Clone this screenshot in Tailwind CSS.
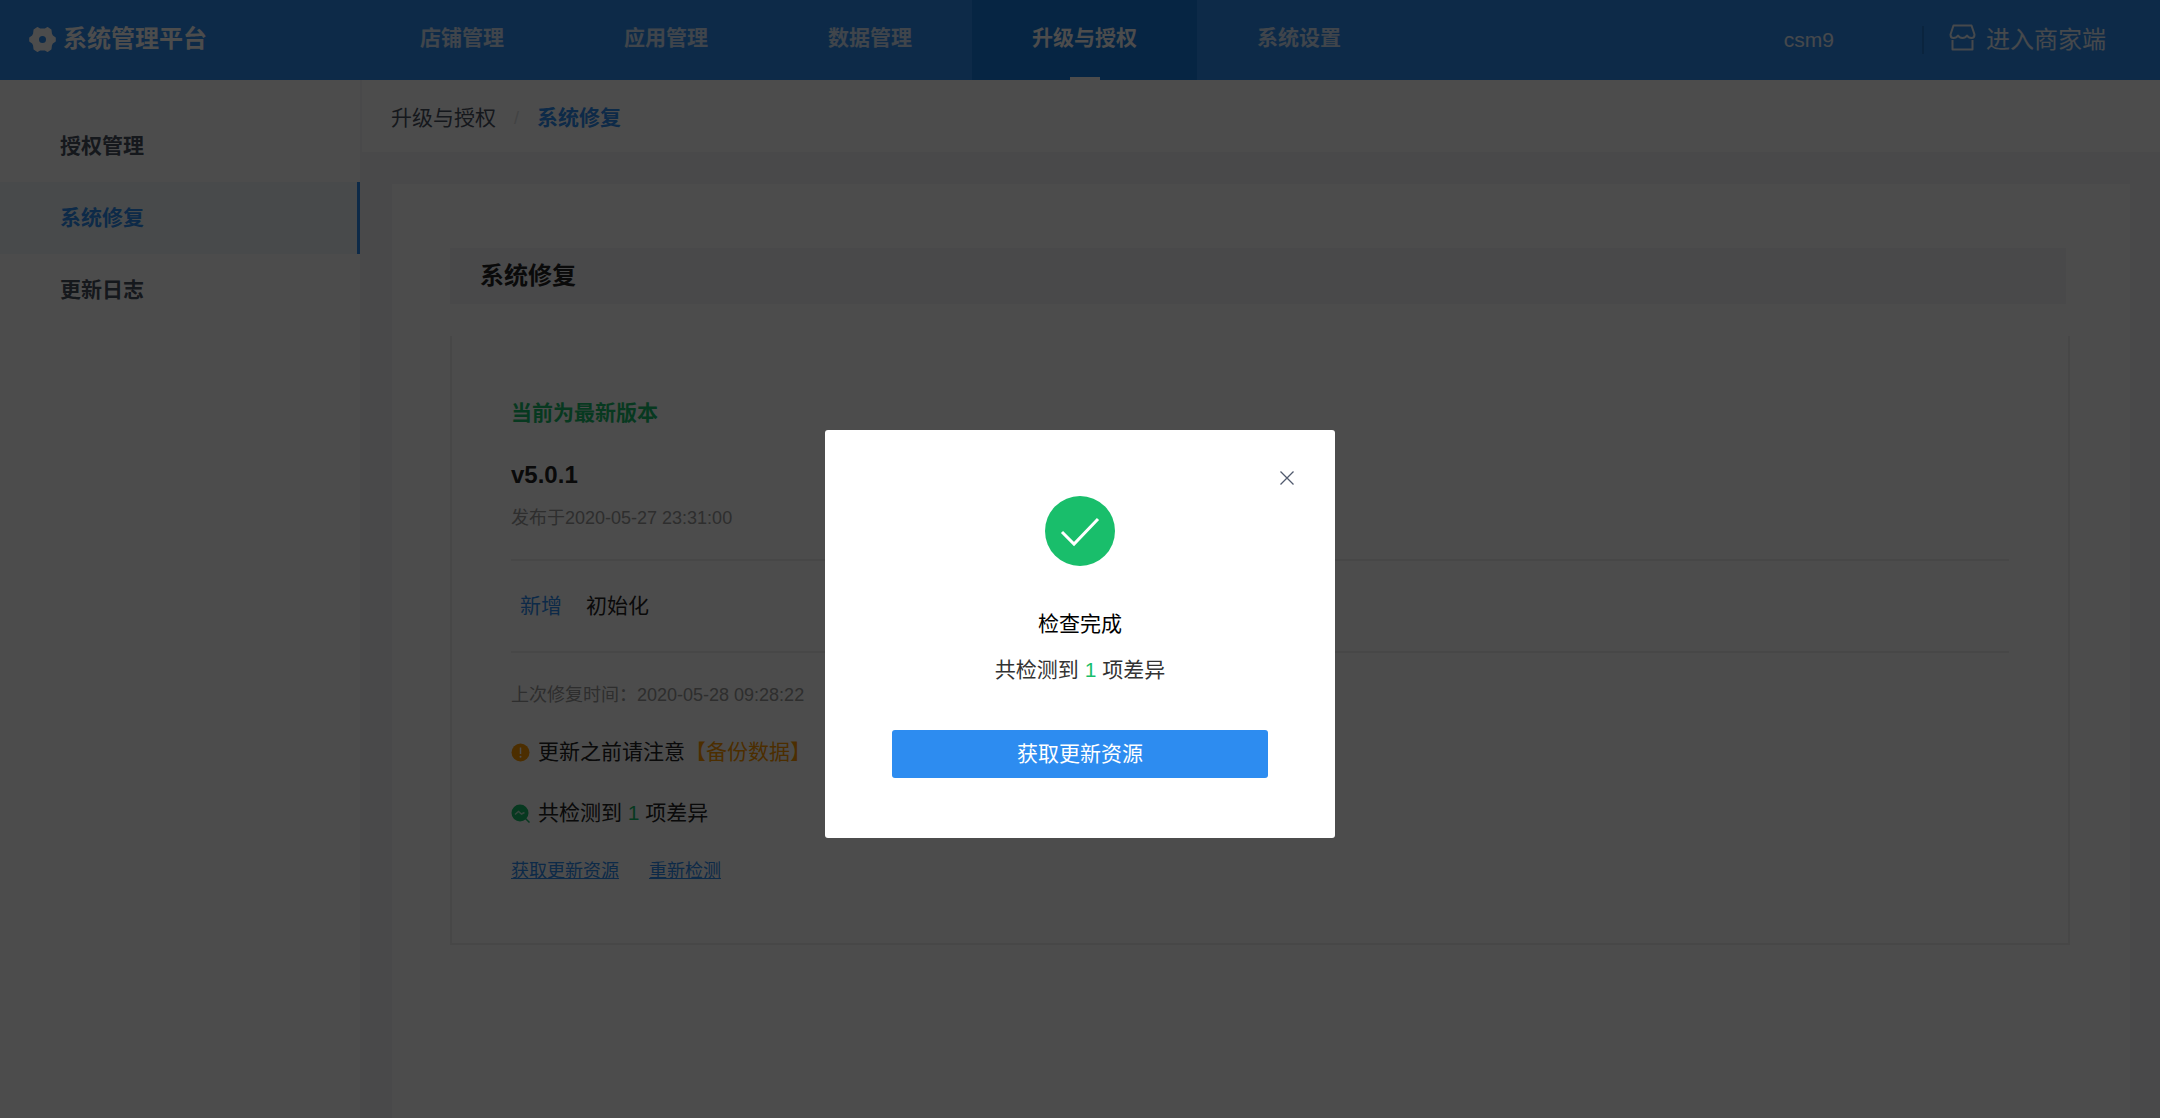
<!DOCTYPE html>
<html lang="zh-CN">
<head>
<meta charset="utf-8">
<meta name="viewport" content="width=device-width, initial-scale=1">
<title>系统管理平台</title>
<script src="https://cdn.jsdelivr.net/npm/@tailwindcss/browser@4"></script>
</head>
<body class="flex min-h-screen flex-col bg-[#f4f4f7] font-['Liberation_Sans','Noto_Sans_CJK_SC',sans-serif] text-[21px] leading-[30px] text-[#222222]">
  <header class="flex h-20 items-stretch bg-[#2d8cf0] text-white">
    <a href="#" class="flex w-[360px] shrink-0 items-center gap-[7px] pl-[29px] pb-[2px] text-[24px] font-bold">
      <svg class="size-[27px]" viewBox="0 0 27 27" fill="currentColor" fill-rule="evenodd" stroke="currentColor" stroke-width="2" stroke-linejoin="round" aria-hidden="true"><path d="M8.500 2 11 3.500H16L18.500 2 21.500 4 22 8 23 10 25.800 12V15L23 17 22 19 21.500 23 18.500 25 16 23.500H11L8.500 25 5.500 23 5 19 4 17 1.200 15V12L4 10 5 8 5.500 4ZM13.500 9a4.500 4.500 0 1 0 0 9 4.500 4.500 0 0 0 0-9Z"/></svg>
      系统管理平台
    </a>
    <nav class="flex items-stretch font-bold text-white/80" aria-label="主导航">
      <a href="#" class="flex items-center px-[60px] pb-1">店铺管理</a>
      <a href="#" class="flex items-center px-[60px] pb-1">应用管理</a>
      <a href="#" class="flex items-center px-[60px] pb-1">数据管理</a>
      <a href="#" class="relative flex items-center bg-[#167ce2] px-[60px] pb-1 text-white" aria-current="page">升级与授权
        <span class="absolute bottom-0 left-1/2 h-[3px] w-[30px] -translate-x-1/2 bg-white"></span>
      </a>
      <a href="#" class="flex items-center px-[60px] pb-1">系统设置</a>
    </nav>
    <div class="ml-auto flex items-center pr-[54px] text-white/90">
      <span>csm9</span>
      <span class="ml-[88px] h-7 w-[2px] bg-[#2478d0]"></span>
      <a href="#" class="ml-[25px] flex items-center gap-[10px] text-[24px]">
        <svg class="mb-[5px] size-[27px]" viewBox="0 0 27 27" fill="none" stroke="currentColor" stroke-width="2" stroke-linejoin="round" aria-hidden="true"><path d="M4.500 1.500H22.500L25.500 10.500Q25.500 14 22.500 14 19.500 14 18 11.500 16.500 14 13.500 14 10.500 14 9 11.500 7.500 14 4.500 14 1.500 14 1.500 10.500ZM3.500 16V25.500H23.500V16"/></svg>
        进入商家端
      </a>
    </div>
  </header>

  <div class="flex flex-1 items-stretch">
    <aside class="w-[362px] shrink-0 border-r-2 border-[#f5f5f7] bg-white pt-[30px] font-bold text-[#495060]">
      <nav class="flex flex-col" aria-label="侧边导航">
        <a href="#" class="flex h-[72px] items-center pl-[60px]">授权管理</a>
        <a href="#" class="flex h-[72px] items-center border-r-3 border-[#2d8cf0] bg-[#f2f9fb] pl-[60px] text-[#2d8cf0]" aria-current="page">系统修复</a>
        <a href="#" class="flex h-[72px] items-center pl-[60px]">更新日志</a>
      </nav>
    </aside>

    <main class="flex min-w-0 flex-1 flex-col">
      <div class="flex h-[72px] items-center gap-[18px] bg-white pt-[3px] pl-[29px]">
        <a href="#" class="text-[#495060]">升级与授权</a>
        <span class="text-[18px] text-[#dcdee2]">/</span>
        <span class="font-bold text-[#2d8cf0]">系统修复</span>
      </div>

      <section class="mx-[30px] mt-[32px] flex-1 bg-white pt-[64px] pr-[60px] pl-[58px]">
        <h1 class="mr-1 flex h-[56px] items-center bg-[#f3f3f8] pl-[30px] text-[24px] font-bold">系统修复</h1>
        <div class="mt-8 border-x-2 border-b-2 border-[#efefef] px-[59px] pt-[62px] pb-[57px]">
          <p class="font-bold text-[#19be6b]">当前为最新版本</p>
          <h2 class="mt-8 text-[24px] font-bold">v5.0.1</h2>
          <p class="mt-[13px] text-[18px] text-[#999999]">发布于2020-05-27 23:31:00</p>
          <div class="mt-[26px] flex h-[94px] items-center gap-6 border-y-2 border-[#efefef] pl-[9px]">
            <span class="text-[#2d8cf0]">新增</span>
            <span>初始化</span>
          </div>
          <p class="mt-[27px] text-[18px] text-[#999999]">上次修复时间：2020-05-28 09:28:22</p>
          <p class="mt-[27px] flex items-center gap-2">
            <svg class="size-[19px]" viewBox="0 0 19 19" aria-hidden="true"><circle cx="9.500" cy="9.500" r="9" fill="#ff9900"/><path d="M9.500 4.500V11" stroke="#fff" stroke-width="1.500"/><circle cx="9.500" cy="13.800" r="1" fill="#fff"/></svg>
            <span>更新之前请注意<span class="text-[#ff9900]">【备份数据】</span></span>
          </p>
          <p class="mt-[31px] flex items-center gap-2">
            <svg class="size-[19px]" viewBox="0 0 19 19" aria-hidden="true"><circle cx="9" cy="9" r="8.500" fill="#19be6b"/><path d="M14.500 14.500 18.500 18.500" stroke="#19be6b" stroke-width="1.500"/><path d="M4 10.500 7.500 7.500 10.500 10 13.500 8.500" fill="none" stroke="#fff" stroke-opacity=".7" stroke-width="1.500"/></svg>
            <span>共检测到 <span class="text-[#19be6b]">1</span> 项差异</span>
          </p>
          <div class="mt-[28px] flex gap-[30px] text-[18px] text-[#2d8cf0] underline">
            <a href="#">获取更新资源</a>
            <a href="#">重新检测</a>
          </div>
        </div>
      </section>
    </main>
  </div>

  <div class="fixed inset-0 flex items-start justify-center bg-black/70 pt-[430px]">
    <div class="relative flex w-[510px] flex-col items-center rounded-[3px] bg-white px-[67px] pt-[66px] pb-[60px]" role="dialog" aria-modal="true" aria-labelledby="dialog-title">
      <button type="button" class="absolute top-[36px] right-[36px] flex size-6 items-center justify-center" aria-label="关闭">
        <svg class="size-[14px]" viewBox="0 0 14 14" fill="none" stroke="#515a6e" stroke-width="1.300" aria-hidden="true"><path d="M.5.500 13.500 13.500M13.500.500.500 13.500"/></svg>
      </button>
      <svg class="size-[70px]" viewBox="0 0 70 70" fill="none" aria-hidden="true"><circle cx="35" cy="35" r="35" fill="#19be6b"/><path d="M17 36 29 48 53 23" stroke="#fff" stroke-width="3"/></svg>
      <h2 id="dialog-title" class="mt-[43px] text-black">检查完成</h2>
      <p class="mt-4 text-[#333333]">共检测到 <span class="text-[#19be6b]">1</span> 项差异</p>
      <button type="button" class="mt-[45px] h-12 w-full rounded-[3px] bg-[#2d8cf0] text-white">获取更新资源</button>
    </div>
  </div>
</body>
</html>
